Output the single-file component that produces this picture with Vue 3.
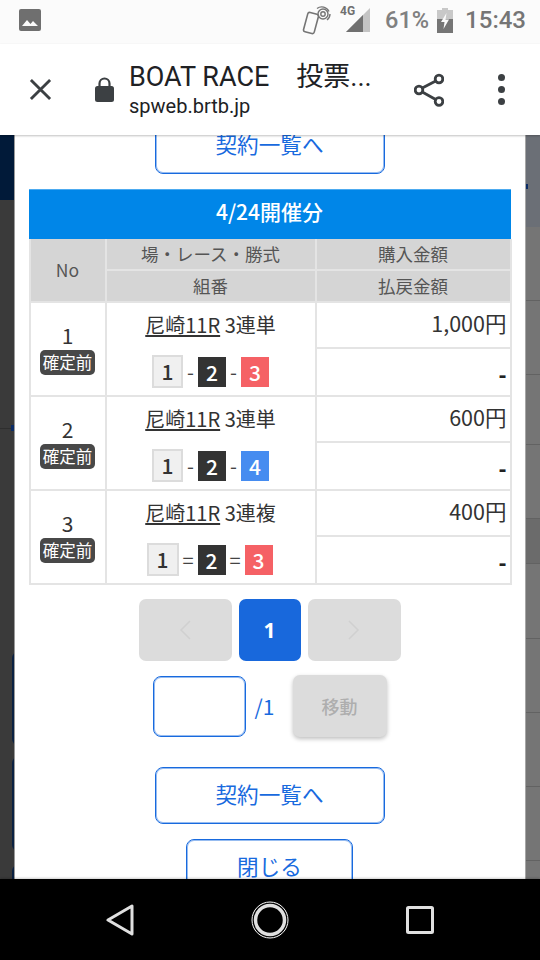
<script setup>
const rows = [
  { no: 1, bet: '3連単', sep: '-', third: '3', thirdClass: 'red', amount: '1,000円' },
  { no: 2, bet: '3連単', sep: '-', third: '4', thirdClass: 'blue', amount: '600円' },
  { no: 3, bet: '3連複', sep: '=', third: '3', thirdClass: 'red', amount: '400円' },
]
const leftLines = [428]
const rightLines = [300, 374, 444, 518, 563, 638, 712, 786, 860]
const leftCards = [
  { top: 652, height: 93 },
  { top: 757, height: 94 },
  { top: 865, height: 40 },
]
</script>

<template>
  <div class="phone">
    <header class="status">
      <svg class="st-image" viewBox="0 0 22 22"><rect width="22" height="22" rx="2" fill="#6f6f6f"/><path d="M3 17l5-6 3.500 4 2.500-3 5 5z" fill="#fafafa"/></svg>
      <div class="st-right">
        <svg class="st-nfc" viewBox="0 0 30 30" fill="none" stroke="#757575"><rect x="3.500" y="8" width="11" height="20" rx="2" transform="rotate(15 9 18)" stroke-width="1.600"/><circle cx="21" cy="9" r="2.200" stroke-width="1.400"/><circle cx="21" cy="9" r="5" stroke-width="1.400"/><path d="M15 3.500a8 8 0 0 1 12 3M28 9a8 8 0 0 1-3 6" stroke-width="1.400"/></svg>
        <div class="st-signal">
          <span class="st-4g">4G</span>
          <svg viewBox="0 0 24 24"><path d="M0 24L24 0v24z" fill="#c4c4c4"/><path d="M0 24L17 7v17z" fill="#707070"/></svg>
        </div>
        <span class="st-batt-text">61%</span>
        <svg class="st-batt" viewBox="0 0 16 25"><path d="M5 0h6v2h5v23H0V2h5z" fill="#c8c8c8"/><path d="M0 11h16v14H0z" fill="#757575"/><path d="M9.500 5L4 14h3.500L6.500 21 12 11.500H8.500z" fill="#fafafa"/></svg>
        <span class="st-time">15:43</span>
      </div>
    </header>

    <div class="toolbar">
      <svg class="tb-close" viewBox="0 0 24 24" fill="none" stroke="#3c4043" stroke-width="3"><path d="M2 2l20 20M22 2L2 22"/></svg>
      <svg class="tb-lock" viewBox="0 0 19 25"><path d="M4.500 10V6.500a5 5 0 0 1 10 0V10" fill="none" stroke="#3c4043" stroke-width="2.200"/><rect y="9" width="19" height="16" rx="2.500" fill="#3c4043"/></svg>
      <div class="tb-title">
        <div class="tb-main">BOAT RACE　投票...</div>
        <div class="tb-url">spweb.brtb.jp</div>
      </div>
      <svg class="tb-share" viewBox="0 0 30 34" fill="none" stroke="#3c4043" stroke-width="2.800"><circle cx="25" cy="6" r="3.800"/><circle cx="25" cy="28.500" r="3.800"/><circle cx="5" cy="17" r="3.800"/><path d="M8.300 15l13.400-7M8.300 19l13.400 7.500"/></svg>
      <div class="tb-dots"><i></i><i></i><i></i></div>
    </div>

    <main class="stage">
      <div class="gutter gutter-left">
        <div class="gl-navy"></div>
        <span v-for="y in leftLines" :key="y" class="g-line" :style="{ top: (y - 135) + 'px' }"></span>
        <span class="g-tick gl-tick"></span>
        <span v-for="c in leftCards" :key="c.top" class="gl-card" :style="{ top: (c.top - 135) + 'px', height: c.height + 'px' }"></span>
      </div>

      <section class="modal">
        <div class="modal-inner">
          <button class="outline wide">契約一覧へ</button>

          <div class="panel">
            <h2 class="panel-title">4/24開催分</h2>
            <table class="bets">
              <colgroup><col class="c1"><col class="c2"><col class="c3"></colgroup>
              <thead>
                <tr><th rowspan="2">No</th><th>場・レース・勝式</th><th>購入金額</th></tr>
                <tr><th>組番</th><th>払戻金額</th></tr>
              </thead>
              <tbody v-for="r in rows" :key="r.no">
                <tr class="r-top">
                  <td rowspan="2" class="no">
                    <div class="no-num">{{ r.no }}</div>
                    <span class="tag">確定前</span>
                  </td>
                  <td rowspan="2" class="race">
                    <div class="race-name"><u>尼崎11R</u> {{ r.bet }}</div>
                    <div class="combo" :class="{ 'combo-eq': r.sep === '=' }">
                      <span class="box b1">1</span>
                      <span class="sep">{{ r.sep }}</span>
                      <span class="box b2">2</span>
                      <span class="sep">{{ r.sep }}</span>
                      <span class="box" :class="r.thirdClass">{{ r.third }}</span>
                    </div>
                  </td>
                  <td class="amount">{{ r.amount }}</td>
                </tr>
                <tr class="r-bottom"><td class="payout">-</td></tr>
              </tbody>
            </table>
          </div>

          <nav class="pager">
            <span class="pg pg-off">
              <svg viewBox="0 0 12 20" fill="none" stroke="#d0d0d0" stroke-width="1.500"><path d="M11 1L2 10l9 9"/></svg>
            </span>
            <span class="pg pg-on">1</span>
            <span class="pg pg-off">
              <svg viewBox="0 0 12 20" fill="none" stroke="#d0d0d0" stroke-width="1.500"><path d="M1 1l9 9-9 9"/></svg>
            </span>
          </nav>

          <div class="goto">
            <input class="goto-input" type="text" aria-label="page">
            <span class="goto-total">/1</span>
            <button class="goto-btn">移動</button>
          </div>

          <button class="outline wide list-btn">契約一覧へ</button>
          <button class="outline close">閉じる</button>
        </div>
      </section>

      <div class="gutter gutter-right">
        <div class="gr-top"></div>
        <div class="gr-dark"></div>
        <span v-for="y in rightLines" :key="y" class="g-line" :style="{ top: (y - 135) + 'px' }"></span>
        <span class="g-tick gr-tick"></span>
      </div>
    </main>

    <footer class="navbar">
      <svg class="nav-back" viewBox="0 0 28 32" fill="none" stroke="#e0e0e0" stroke-width="3" stroke-linejoin="round"><path d="M26 2v28L2 16z"/></svg>
      <svg class="nav-home" viewBox="0 0 38 38" fill="none"><circle cx="19" cy="19" r="18" stroke="#fff" stroke-width="1"/><circle cx="19" cy="19" r="14.500" stroke="#e0e0e0" stroke-width="3.500"/></svg>
      <svg class="nav-recent" viewBox="0 0 28 28" fill="none" stroke="#e0e0e0" stroke-width="3" stroke-linejoin="round"><rect x="1.500" y="1.500" width="25" height="25" rx="1"/></svg>
    </footer>
  </div>
</template>

<style>
html, body { margin: 0; padding: 0; background: #000; }
</style>

<style scoped>
.phone {
  width: 540px;
  height: 960px;
  display: flex;
  flex-direction: column;
  overflow: hidden;
  font-family: "Noto Sans CJK JP", "Noto Sans", sans-serif;
  background: #000;
}

/* status bar */
.status {
  height: 44px;
  flex: none;
  display: flex;
  align-items: center;
  justify-content: space-between;
  padding: 0 14px 4px 19px;
  box-sizing: border-box;
  background: #fbfbfb;
}
.st-image { width: 22px; height: 22px; }
.st-right { display: flex; align-items: center; }
.st-nfc { width: 30px; height: 30px; }
.st-signal { position: relative; width: 30px; height: 24px; margin-left: 8px; }
.st-signal svg { position: absolute; right: 0; bottom: 0; width: 24px; height: 24px; }
.st-4g {
  position: absolute; left: 0; top: -4px;
  font: 700 12px Roboto, sans-serif; color: #707070;
}
.st-batt-text {
  margin-left: 15px;
  font: 500 23.500px Roboto, sans-serif; color: #808080;
}
.st-batt { width: 16px; height: 25px; margin-left: 8px; }
.st-time {
  margin-left: 12px;
  font: 500 24px Roboto, sans-serif; color: #757575;
}

/* toolbar */
.toolbar {
  height: 91px;
  flex: none;
  display: flex;
  align-items: center;
  box-sizing: border-box;
  padding-left: 29px;
  background: #fff;
  position: relative;
  z-index: 2;
  box-shadow: 0 1px 2px rgba(0, 0, 0, .25);
}
.tb-close { width: 23px; height: 23px; flex: none; }
.tb-lock { width: 19px; height: 25px; flex: none; margin-left: 43px; }
.tb-title { margin-left: 15px; width: 270px; color: #202124; }
.tb-main {
  font: 400 27px/32px Roboto, "Noto Sans CJK JP", sans-serif;
  white-space: nowrap;
}
.tb-url { font: 400 20px/26px Roboto, sans-serif; }
.tb-share { width: 30px; height: 34px; flex: none; margin-left: 15px; }
.tb-dots {
  display: flex; flex-direction: column; gap: 5px;
  margin-left: 54px;
}
.tb-dots i { display: block; width: 7px; height: 7px; border-radius: 50%; background: #3c4043; }

/* stage */
.stage {
  flex: 1;
  min-height: 0;
  display: flex;
  overflow: hidden;
}
.gutter { position: relative; flex: none; overflow: hidden; }
.gutter-left { width: 14px; background: #3a3a3a; }
.gl-navy { height: 65px; background: #011a39; }
.gutter-right { width: 14px; background: #757575; }
.gr-top { height: 92px; background: #6b6f76; }
.gr-dark { position: absolute; left: 0; right: 0; top: 383px; height: 45px; background: #6b6b6b; }
.g-line { position: absolute; left: 0; right: 0; height: 1px; background: #626262; }
.gutter-left .g-line { background: #2e2e2e; }
.g-tick { position: absolute; background: #0b2c66; }
.gl-tick { left: 11px; top: 290px; width: 3px; height: 6px; }
.gr-tick { left: 0; top: 49px; width: 2px; height: 5px; }
.gl-card {
  position: absolute;
  left: 12px;
  width: 6px;
  box-sizing: border-box;
  border: 2px solid #0a2142;
  border-radius: 6px 0 0 6px;
}

.modal {
  flex: 1;
  min-width: 0;
  background: #fff;
  border-left: 1px solid #9a9a9a;
  border-right: 1px solid #a6a6a6;
  overflow: hidden;
}
.modal-inner {
  display: flex;
  flex-direction: column;
  align-items: center;
  margin-top: -18px;
  padding: 0 15px 0 14px;
}

/* buttons */
.outline {
  flex: none;
  box-sizing: border-box;
  background: #fff;
  border: 1px solid #186ade;
  box-shadow: inset 0 0 0 1px rgba(24, 106, 222, .45);
  border-radius: 8px;
  color: #186ade;
  font-family: inherit;
  font-size: 21.600px;
  line-height: 50px;
  padding: 0 0 4px;
}
.wide { width: 230px; height: 57px; }
.close { width: 167px; height: 57px; margin-top: 15px; }
.list-btn { margin-top: 30px; }

/* table panel */
.panel { width: 482px; margin-top: 15px; }
.panel-title {
  margin: 0;
  height: 50px;
  line-height: 43px;
  text-align: center;
  background: #0086e8;
  border-top: 1px solid #4dabf0;
  box-sizing: border-box;
  color: #fff;
  font-size: 21px;
  font-weight: 500;
}
.bets {
  width: 481px;
  table-layout: fixed;
  border-collapse: collapse;
  border: 2px solid #e4e4e4;
  border-top: 0;
}
.c1 { width: 76px; }
.c2 { width: 210px; }
.c3 { width: 195px; }
.bets th {
  height: 32px;
  padding: 0;
  background: #d5d5d5;
  border: 2px solid #e4e4e4;
  color: #555;
  font-size: 17.500px;
  font-weight: 400;
  line-height: 20px;
  box-sizing: border-box;
}
.bets thead tr:first-child th { border-top: 0; height: 31px; }
.bets td {
  padding: 0;
  border: 2px solid #e4e4e4;
  color: #333;
  text-align: center;
}
.r-top td.amount {
  height: 46px;
  text-align: right;
  vertical-align: top;
  padding: 5px 3px 0 0;
  box-sizing: border-box;
  font-size: 21.500px;
  line-height: 30px;
}
.r-bottom td.payout {
  height: 48px;
  text-align: right;
  padding: 3px 3px 0 0;
  box-sizing: border-box;
  font-size: 21px;
  font-weight: 900;
  color: #222;
  line-height: 30px;
}
.bets td.no { vertical-align: top; padding-top: 19px; }
.no-num { font-size: 21px; line-height: 26px; }
.tag {
  display: block;
  width: 55px;
  height: 25px;
  margin: 2px auto 0;
  line-height: 24px;
  border-radius: 5px;
  background: #484848;
  color: #fff;
  font-size: 16.500px;
  text-align: center;
}
.race { vertical-align: top; }
.race-name { font-size: 20px; line-height: 28px; margin-top: 8px; color: #333; }
.race-name u { text-underline-offset: 2px; text-decoration-thickness: 1.500px; }
.combo {
  display: flex;
  justify-content: center;
  align-items: center;
  margin-top: 16px;
}
.combo-eq { padding-right: 2px; }
.box {
  display: block;
  box-sizing: border-box;
  width: 28px;
  height: 30px;
  line-height: 30px;
  text-align: center;
  font-size: 21px;
  font-weight: 500;
  color: #fff;
}
.b1 {
  width: 31px;
  height: 33px;
  line-height: 29px;
  background: #f0f0f0;
  border: 2px solid #dcdcdc;
  color: #333;
}
.combo-eq .b1 { width: 32px; }
.b2 { background: #333; }
.red { background: #f56165; }
.blue { background: #468cf0; }
.sep {
  width: 15px;
  text-align: center;
  font-size: 20px;
  line-height: 30px;
  color: #444;
}
.combo-eq .sep { width: 19px; }

/* pager */
.pager { display: flex; gap: 7px; margin-top: 14px; }
.pg {
  display: flex;
  align-items: center;
  justify-content: center;
  height: 62px;
  border-radius: 7px;
}
.pg-off { width: 93px; background: #dcdcdc; }
.pg-off svg { width: 12px; height: 20px; }
.pg-on {
  width: 62px;
  background: #1868dc;
  color: #fff;
  font: 700 21px "Noto Sans", sans-serif;
}
.goto { display: flex; align-items: center; margin-top: 14px; width: 234px; }
.goto-input {
  width: 93px;
  height: 61px;
  box-sizing: border-box;
  border: 1px solid #186ade;
  box-shadow: inset 0 0 0 1px rgba(24, 106, 222, .45);
  border-radius: 8px;
  background: #fff;
  padding: 0;
  outline: none;
  flex: none;
}
.goto-total {
  width: 47px;
  padding-left: 9px;
  box-sizing: border-box;
  color: #186ade;
  font-size: 21px;
}
.goto-btn {
  width: 94px;
  height: 62px;
  flex: none;
  border: 0;
  border-radius: 7px;
  background: #dcdcdc;
  color: #aeaeae;
  font-family: inherit;
  font-size: 18px;
  font-weight: 500;
  padding: 0;
  box-shadow: 0 2px 4px rgba(0, 0, 0, .25);
}

/* navbar */
.navbar {
  height: 81px;
  flex: none;
  position: relative;
  background: #000;
  box-shadow: 0 -1px 2px rgba(0, 0, 0, .2);
  display: grid;
  grid-template-columns: 1fr 1fr 1fr;
  padding: 0 45px;
  align-items: center;
  justify-items: center;
}
.nav-back { width: 28px; height: 32px; }
.nav-home { width: 38px; height: 38px; }
.nav-recent { width: 28px; height: 28px; }
</style>
